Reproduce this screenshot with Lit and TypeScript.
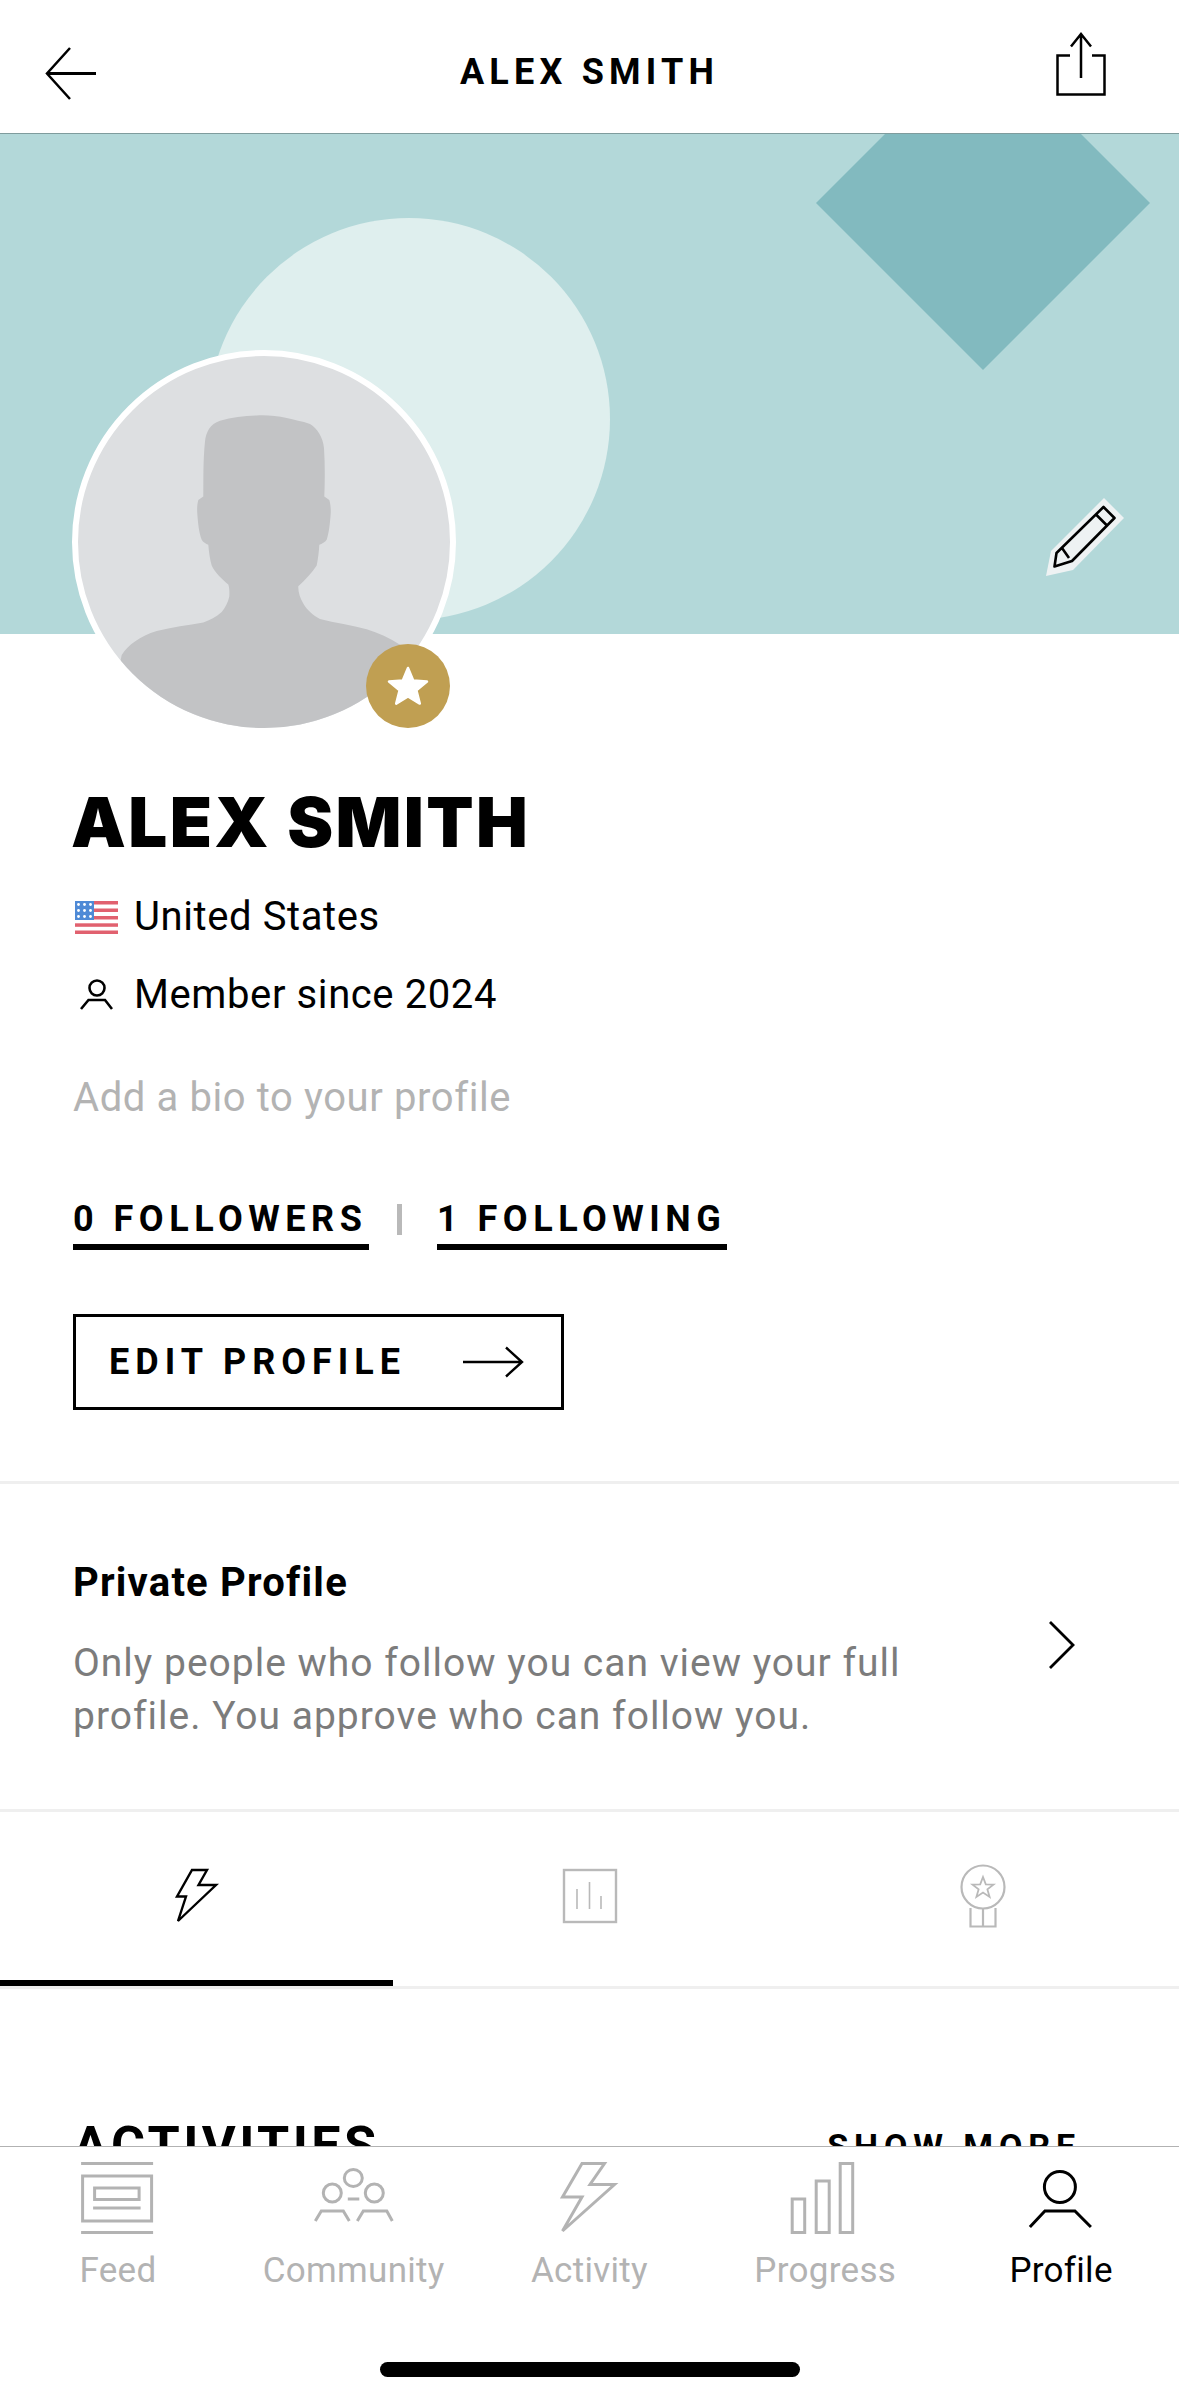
import { LitElement, html, css, svg } from "lit";
import { customElement } from "lit/decorators.js";

const GREY = "#b3b3b3";

@customElement("app-root")
export class AppRoot extends LitElement {
  static styles = css`
    :host {
      display: flex;
      flex-direction: column;
      width: 1179px;
      height: 2396px;
      background: #fff;
      color: #000;
      font-family: Roboto, "Noto Sans", sans-serif;
      overflow: hidden;
    }
    svg { display: block; }
    .header {
      flex: none;
      box-sizing: content-box;
      height: 133px;
      border-bottom: 1px solid #7f9c9d;
      display: grid;
      grid-template-columns: 1fr auto 1fr;
      align-items: start;
    }
    .header .title {
      margin-top: 54px;
      font-size: 36px;
      line-height: 36px;
      font-weight: 700;
      letter-spacing: 5.2px;
    }
    .hleft { padding: 46px 0 0 40px; }
    .hright { justify-self: end; padding: 31px 70px 0 0; }
    .main { flex: 1; min-height: 0; overflow: hidden; }
    .banner { position: relative; height: 500px; background: #b3d8d9; }
    .banner .art { position: absolute; inset: 0; }
    .pencil { position: absolute; left: 1040px; top: 360px; }
    .avatar-wrap { position: absolute; left: 72px; top: 216px; width: 384px; height: 384px; }
    .avatar {
      box-sizing: border-box;
      width: 384px;
      height: 384px;
      border: 6px solid #fff;
      border-radius: 50%;
      overflow: hidden;
      background: #dddfe1;
    }
    .badge {
      position: absolute;
      left: 294px;
      top: 294px;
      width: 84px;
      height: 84px;
      border-radius: 50%;
      background: #c09f52;
      display: flex;
      align-items: center;
      justify-content: center;
    }
    .info { padding: 153px 0 0 73px; }
    .name {
      margin-left: -2px;
      font-family: Inter, Roboto, sans-serif;
      font-size: 69px;
      line-height: 70px;
      font-weight: 900;
      letter-spacing: 2.4px;
    }
    .meta {
      display: flex;
      align-items: center;
      height: 40px;
      font-size: 40px;
      line-height: 40px;
      letter-spacing: 0.6px;
    }
    .meta.first { margin-top: 40px; }
    .meta.second { margin-top: 38px; }
    .meta .ic { width: 61px; flex: none; }
    .bio {
      margin-top: 63px;
      font-size: 40px;
      line-height: 40px;
      letter-spacing: 0.6px;
      color: ${css([GREY] as any)};
    }
    .follow { margin-top: 83px; display: flex; align-items: flex-start; }
    .flink {
      font-size: 36px;
      line-height: 36px;
      font-weight: 700;
      letter-spacing: 5.5px;
      padding-bottom: 7px;
      border-bottom: 6px solid #000;
    }
    .flink.a { width: 296px; box-sizing: border-box; }
    .flink.b { width: 290px; box-sizing: border-box; }
    .sep { width: 5px; height: 31px; margin: 3px 35px 0 28px; background: #b9b9b9; }
    .edit {
      box-sizing: border-box;
      margin-top: 64px;
      width: 491px;
      height: 96px;
      border: 3px solid #000;
      display: flex;
      align-items: center;
      padding-left: 33px;
      font-size: 36px;
      line-height: 36px;
      font-weight: 700;
      letter-spacing: 6px;
    }
    .edit span { width: 353px; flex: none; }
    .private {
      position: relative;
      margin-top: 71px;
      height: 331px;
      box-sizing: border-box;
      border-top: 3px solid #efefef;
      border-bottom: 3px solid #efefef;
      padding: 79px 0 0 73px;
    }
    .ptitle { font-size: 40px; line-height: 40px; font-weight: 700; letter-spacing: 1.2px; }
    .pdesc {
      margin-top: 34px;
      width: 900px;
      font-size: 39px;
      line-height: 53px;
      letter-spacing: 1px;
      color: #7c7c7c;
    }
    .chev { position: absolute; left: 1046px; top: 136px; }
    .tabs {
      display: grid;
      grid-template-columns: repeat(3, 393px);
      height: 174px;
      border-bottom: 3px solid #efefef;
    }
    .tab { display: flex; justify-content: center; padding-top: 54px; box-sizing: border-box; height: 174px; }
    .tab.on { border-bottom: 6px solid #000; }
    .sec {
      display: flex;
      justify-content: space-between;
      align-items: flex-start;
      padding: 136px 98px 0 73px;
    }
    .sec h2 { margin: 0; font-size: 52px; line-height: 42px; font-weight: 700; letter-spacing: 3.4px; }
    .sec .more { margin-top: 3px; font-size: 34px; line-height: 36px; font-weight: 700; letter-spacing: 5.9px; }
    .nav {
      flex: none;
      height: 250px;
      box-sizing: border-box;
      border-top: 1px solid #b2b2b2;
      background: #fff;
      display: flex;
      flex-direction: column;
      align-items: center;
    }
    .items { display: grid; grid-template-columns: repeat(5, 1fr); width: 100%; }
    .item {
      display: flex;
      flex-direction: column;
      align-items: center;
      padding-top: 14px;
      font-size: 35px;
      line-height: 35px;
      letter-spacing: 0.3px;
      color: ${css([GREY] as any)};
    }
    .item.on { color: #000; }
    .item .lbl { margin-top: 16px; }
    .home { margin-top: 74px; width: 420px; height: 15px; border-radius: 8px; background: #000; }
  `;

  private navIcon(cx: number, body: unknown) {
    return html`<svg width="100" height="76" viewBox="${cx - 50} 2161 100 76" fill="none" stroke="${GREY}" stroke-width="3">${body}</svg>`;
  }

  render() {
    const w = 235.8;
    const c = (i: number) => w * i + w / 2;
    const items = [
      ["Feed", svg`<path d="M81 2163.5H153M82.5 2176H151.5V2221H82.5ZM94.5 2188H139V2199.5H94.5ZM93 2208H140.5M81 2232.5H153"/>`],
      ["Community", svg`<ellipse cx="353" cy="2178" rx="9" ry="8.5"/><ellipse cx="332" cy="2193" rx="9" ry="9"/><ellipse cx="374" cy="2193" rx="9" ry="9"/><path d="M347.5 2199H359M315 2221L321 2211H343L349 2221M357 2221L363 2211H386.5L392 2221"/>`],
      ["Activity", svg`<path d="M582.5 2163.5H605L590.5 2184.5H615L563 2231L582.5 2197H563Z"/>`],
      ["Progress", svg`<path d="M792.5 2199H805V2232.5H792.5ZM816.5 2181H829.5V2232.5H816.5ZM840.5 2163.5H853V2232.5H840.5Z"/>`],
    ] as [string, unknown][];

    return html`
      <div class="header">
        <div class="hleft">
          <svg width="60" height="56" viewBox="40 46 60 56" fill="none" stroke="#000" stroke-width="2.5">
            <path d="M70 48L47 73.5L70 99"/><path d="M47 73.5H96" stroke-width="3"/>
          </svg>
        </div>
        <div class="title">ALEX SMITH</div>
        <div class="hright">
          <svg width="56" height="68" viewBox="1053 31 56 68" fill="none" stroke="#000" stroke-width="2.5">
            <path d="M1070 55.5H1057.5V94.5H1104.5V55.5H1092"/><path d="M1081 78V34M1071 46.5L1081 34L1091 46.5"/>
          </svg>
        </div>
      </div>
      <div class="main">
        <div class="banner">
          <svg class="art" width="1179" height="500" viewBox="0 134 1179 500">
            <circle cx="409" cy="419" r="201" fill="#dfefee"/>
            <path d="M885 134H1081L1150 203L983 370L816 203Z" fill="#82babf"/>
          </svg>
          <div class="avatar-wrap">
            <div class="avatar">
              <svg width="372" height="372" viewBox="78 356 372 372">
                <path fill="#c2c3c5" d="M256.7 415.5C244 416 232 417 220 420.7C210 424 206 432 205 441.4C203 460 203.5 480 203.3 496.6L198.3 500C197 505 197 509 197.3 513.8C198 523 199 533 201.7 539.7C203 542 206 544 208.3 544.8C209 553 210 560 211.7 565.5C215 573 222 579 228.3 584.5C229.5 588 229.5 592 229.3 596.6C228 603 225 608 221.7 612C216 617 210 620 203.3 622.4C188 625 172 627 156.7 631C140 636 128 645 121.7 655L100 760H420L400 644.8C390 638 378 633 366.7 629.3C352 625 335 623 320 619C313 615 307 610 303.3 603.4C300 598 298 592 298.3 586.2C305 580 312 573 316.7 565.5C318 559 319 552 319.3 544.8C322 544 325 542 326.7 539.7C329 533 330 523 330.7 513.8C331 509 330.5 504 329.3 500L324.3 496.6C325 480 325 464 324 448C323 437 317 428 310 424C302 421 294 420 286.7 418C277 416 267 415 256.7 415.5Z"/>
              </svg>
            </div>
            <div class="badge">
              <svg width="44" height="42" viewBox="0 0 44 42">
                <path fill="#fff" stroke="#fff" stroke-width="2.5" stroke-linejoin="round" d="M22 3L27.2 15.6L41 16.6L30.4 25.4L33.8 38.6L22 31.4L10.2 38.6L13.6 25.4L3 16.6L16.8 15.6Z"/>
              </svg>
            </div>
          </div>
          <svg class="pencil" width="84" height="84" viewBox="1040 494 84 84">
            <path fill="#eef2f3" d="M1104 498L1124 518L1073 570L1046 576L1051 551Z"/>
            <path fill="none" stroke="#000" stroke-width="2.6" stroke-linejoin="round" d="M1103.5 507L1114.5 518L1072 561L1054.5 566.5L1056.5 553ZM1096 514.5L1107 525.5M1062 548L1069 558"/>
          </svg>
        </div>
        <div class="info">
          <div class="name">ALEX SMITH</div>
          <div class="meta first">
            <div class="ic">
              <svg width="43" height="33" viewBox="0 0 43 33" style="margin-left:2px">
                <rect width="43" height="33" fill="#fff"/>
                ${[0, 7.5, 15, 22.3, 29.5].map((y) => svg`<rect y="${y}" width="43" height="3.5" fill="#e1616f"/>`)}
                <rect width="19" height="19" fill="#4f8ad6"/>
                ${[3.5, 9.5, 15.5].map((y) => [3.5, 9.5, 15.5].map((x) => svg`<circle cx="${x}" cy="${y}" r="1.4" fill="#fff"/>`))}
              </svg>
            </div>
            <span>United States</span>
          </div>
          <div class="meta second">
            <div class="ic">
              <svg width="40" height="32" viewBox="73 978 40 32" fill="none" stroke="#000" stroke-width="2.6">
                <circle cx="97" cy="987" r="7.5"/><path d="M81 1008L88.5 999H105L112 1008"/>
              </svg>
            </div>
            <span>Member since 2024</span>
          </div>
          <div class="bio">Add a bio to your profile</div>
          <div class="follow">
            <div class="flink a">0 FOLLOWERS</div>
            <div class="sep"></div>
            <div class="flink b">1 FOLLOWING</div>
          </div>
          <div class="edit">
            <span>EDIT PROFILE</span>
            <svg width="62" height="32" viewBox="461 1346 62 32" fill="none" stroke="#000" stroke-width="2.4">
              <path d="M462 1362H521M505 1347.5L521 1362L505 1376.5"/>
            </svg>
          </div>
        </div>
        <div class="private">
          <div class="ptitle">Private Profile</div>
          <div class="pdesc">Only people who follow you can view your full profile. You approve who can follow you.</div>
          <svg class="chev" width="32" height="50" viewBox="1044 1621 32 50" fill="none" stroke="#000" stroke-width="2.8">
            <path d="M1048 1623L1071 1646L1048 1669"/>
          </svg>
        </div>
        <div class="tabs">
          <div class="tab on">
            <svg width="50" height="60" viewBox="173 1866 50 60" fill="none" stroke="#000" stroke-width="2.4">
              <path d="M193 1870H208L199.5 1885H217L179 1921L187 1896.5H178Z"/>
            </svg>
          </div>
          <div class="tab">
            <svg width="60" height="60" viewBox="560 1866 60 60" fill="none" stroke="#b9b9b9" stroke-width="2.4">
              <rect x="564" y="1870" width="52" height="52"/>
              <path stroke-width="1.6" d="M577 1889V1909M589.5 1882V1909M601 1896V1909"/>
            </svg>
          </div>
          <div class="tab">
            <svg width="60" height="70" viewBox="953 1861 60 70" fill="none" stroke="#b9b9b9" stroke-width="2.2" style="margin-top:-5px">
              <ellipse cx="983" cy="1887" rx="21.5" ry="21.5"/>
              <path stroke-width="1.8" d="M983 1877L985.8 1884.4L993.5 1884.6L987.4 1889.4L989.6 1897L983 1892.6L976.4 1897L978.6 1889.4L972.5 1884.6L980.2 1884.4Z"/>
              <path d="M970.5 1908V1926.5H995.5V1908M983 1908V1926.5"/>
            </svg>
          </div>
        </div>
        <div class="sec">
          <h2>ACTIVITIES</h2>
          <div class="more">SHOW MORE</div>
        </div>
      </div>
      <div class="nav">
        <div class="items">
          ${items.map(([l, b], i) => html`<div class="item">${this.navIcon(c(i), b)}<span class="lbl">${l}</span></div>`)}
          <div class="item on">
            <svg width="100" height="76" viewBox="${c(4) - 50} 2161 100 76" fill="none" stroke="#000" stroke-width="3">
              <ellipse cx="1060" cy="2187" rx="15.5" ry="15.5"/><path d="M1030 2227L1045 2211H1075L1091 2227"/>
            </svg>
            <span class="lbl">Profile</span>
          </div>
        </div>
        <div class="home"></div>
      </div>
    `;
  }
}
